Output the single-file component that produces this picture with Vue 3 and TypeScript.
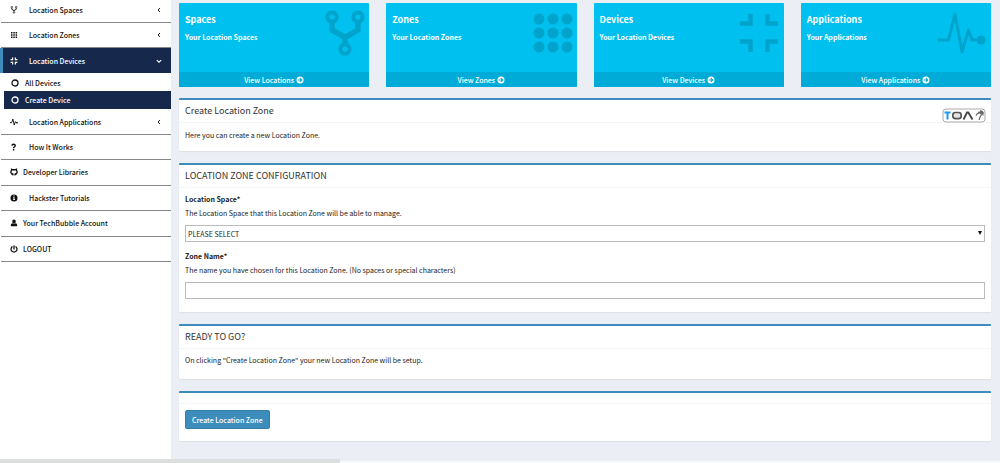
<script setup lang="ts">
import { ref } from 'vue'

interface NavItem { label: string; icon: string; wide?: boolean; arrow?: boolean }
interface Card { title: string; text: string; link: string; icon: string }

const topNav: NavItem[] = [
  { label: 'Location Spaces', icon: 'fork', wide: true, arrow: true },
  { label: 'Location Zones', icon: 'grid', wide: true, arrow: true },
]
const bottomNav: NavItem[] = [
  { label: 'Location Applications', icon: 'beat', wide: true, arrow: true },
  { label: 'How It Works', icon: 'question', wide: true },
  { label: 'Developer Libraries', icon: 'github' },
  { label: 'Hackster Tutorials', icon: 'info', wide: true },
  { label: 'Your TechBubble Account', icon: 'user' },
  { label: 'LOGOUT', icon: 'power' },
]
const cards: Card[] = [
  { title: 'Spaces', text: 'Your Location Spaces', link: 'View Locations', icon: 'fork' },
  { title: 'Zones', text: 'Your Location Zones', link: 'View Zones', icon: 'dots' },
  { title: 'Devices', text: 'Your Location Devices', link: 'View Devices', icon: 'corners' },
  { title: 'Applications', text: 'Your Applications', link: 'View Applications', icon: 'pulse' },
]
const space = ref('')
const zoneName = ref('')
</script>

<template>
  <svg class="defs" aria-hidden="true">
    <symbol id="fork" viewBox="0 0 48 48" preserveAspectRatio="xMaxYMid">
      <g fill="none" stroke="currentColor">
        <g stroke-width="4"><circle cx="11" cy="7" r="4.600" /><circle cx="37" cy="7" r="4.600" /><circle cx="24" cy="39" r="4.600" /></g>
        <path d="M11 12v8l13 7.500 13-7.500v-8M24 26v8" stroke-width="5.500" />
      </g>
    </symbol>
    <symbol id="dots" viewBox="0 0 48 48" preserveAspectRatio="xMaxYMid">
      <g fill="currentColor">
        <circle cx="10" cy="9" r="5.500" /><circle cx="24" cy="9" r="5.500" /><circle cx="38" cy="9" r="5.500" />
        <circle cx="10" cy="23" r="5.500" /><circle cx="24" cy="23" r="5.500" /><circle cx="38" cy="23" r="5.500" />
        <circle cx="10" cy="37" r="5.500" /><circle cx="24" cy="37" r="5.500" /><circle cx="38" cy="37" r="5.500" />
      </g>
    </symbol>
    <symbol id="grid" viewBox="0 0 8 8">
      <path fill="currentColor" d="M1 1h1.500v1.500H1zM3.300 1h1.500v1.500H3.300zM5.600 1h1.500v1.500H5.600zM1 3.300h1.500v1.500H1zM3.300 3.300h1.500v1.500H3.300zM5.600 3.300h1.500v1.500H5.600zM1 5.600h1.500v1.500H1zM3.300 5.600h1.500v1.500H3.300zM5.600 5.600h1.500v1.500H5.600z" />
    </symbol>
    <symbol id="corners" viewBox="0 0 48 48" preserveAspectRatio="xMaxYMid">
      <path fill="none" stroke="currentColor" stroke-width="4.500" d="M4 13.500h10.500V4M42 13.500H31.500V4M4 31.500h10.500V42M42 31.500H31.500V42" />
    </symbol>
    <symbol id="corners-small" viewBox="0 0 8 8">
      <path fill="none" stroke="currentColor" stroke-width="1.200" d="M.6 2.600h2v-2M7.400 2.600h-2v-2M.6 5.400h2v2M7.400 5.400h-2v2" />
    </symbol>
    <symbol id="pulse" viewBox="0 0 54 48">
      <path fill="none" stroke="currentColor" stroke-width="3" stroke-linejoin="round" stroke-linecap="round" d="M2 30h9.500L18 4 25 42l6.500-22L35 30H44" />
      <circle cx="44" cy="30" r="4.600" fill="currentColor" />
    </symbol>
    <symbol id="beat" viewBox="0 0 8 8">
      <path fill="none" stroke="currentColor" stroke-width=".9" stroke-linejoin="round" d="M0 4.700h1.700L2.900 1l1.300 6 1.200-3.400.6 1.100h1.500" />
      <circle cx="7" cy="4.700" r=".8" fill="currentColor" />
    </symbol>
    <symbol id="question" viewBox="0 0 10 10">
      <path fill="none" stroke="currentColor" stroke-width="1.800" d="M2.500 3.400C2.500.9 6.500 1 6.500 3.300 6.500 4.700 4.500 4.700 4.500 6.500M4.500 7.500V9.300" />
    </symbol>
    <symbol id="github" viewBox="0 0 10 10">
      <path fill="none" stroke="currentColor" stroke-width="1.700" d="M3.800 8.200C.4 7.200.7 4 2.100 2.700L2 1.500l1.800.7h2.400L8 1.500l-.1 1.200C9.300 4 9.600 7.200 6.200 8.200" />
      <path fill="currentColor" d="M2.500 6.400l1.900.6v2.400H3.200zM7.500 6.400l-1.900.6v2.400h1.200z" />
    </symbol>
    <symbol id="info" viewBox="0 0 10 10">
      <circle cx="5" cy="5" r="4.400" fill="currentColor" />
      <path fill="#fff" d="M4.300 2h1.400v1.200H4.300zM3.900 4h1.800v2.700h.6v.9H3.800v-.9h.6V4.900h-.5z" />
    </symbol>
    <symbol id="user" viewBox="0 0 10 10">
      <path fill="currentColor" d="M5 .6C3.600.6 2.800 1.800 2.800 3s.8 2.700 2.200 2.700S7.200 4.200 7.200 3 6.400.6 5 .6zM3 5.200C1.400 5.400 1 6.700 1 8c0 .7.400 1.200 1 1.200h6c.6 0 1-.5 1-1.200 0-1.300-.4-2.600-2-2.800-1 1.200-3 1.200-4 0z" />
    </symbol>
    <symbol id="power" viewBox="0 0 10 10">
      <path fill="none" stroke="currentColor" stroke-width="1.600" stroke-linecap="round" d="M2.700 2.300a3.700 3.700 0 1 0 4.600 0M5 1v4" />
    </symbol>
    <symbol id="ring" viewBox="0 0 8 8">
      <circle cx="4" cy="4" r="3" fill="none" stroke="currentColor" stroke-width="1.300" />
    </symbol>
    <symbol id="left" viewBox="0 0 10 10">
      <path fill="none" stroke="currentColor" stroke-width="1.200" d="M6.200 2.500L3.800 5l2.400 2.500" />
    </symbol>
    <symbol id="down" viewBox="0 0 10 10">
      <path fill="none" stroke="currentColor" stroke-width="1.300" d="M2.200 3.800L5 6.500l2.800-2.700" />
    </symbol>
    <symbol id="go" viewBox="0 0 8 8">
      <circle cx="4" cy="4" r="3.500" fill="currentColor" />
      <path fill="none" stroke="#00acd7" stroke-width="1.100" d="M1.600 4h4M3.900 2.100L5.800 4 3.900 5.900" />
    </symbol>
  </svg>

  <div class="page">
    <nav class="sidebar">
      <a v-for="n in topNav" :key="n.label" href="#" class="item">
        <svg class="icon"><use :href="'#' + n.icon" /></svg>
        <span class="label wide">{{ n.label }}</span>
        <svg class="icon chevron"><use href="#left" /></svg>
      </a>
      <a href="#" class="item active">
        <svg class="icon"><use href="#corners-small" /></svg>
        <span class="label wide">Location Devices</span>
        <svg class="icon chevron"><use href="#down" /></svg>
      </a>
      <div class="sub">
        <a href="#" class="subitem"><svg class="icon"><use href="#ring" /></svg>All Devices</a>
        <a href="#" class="subitem current"><svg class="icon"><use href="#ring" /></svg>Create Device</a>
      </div>
      <div class="rest">
        <a v-for="n in bottomNav" :key="n.label" href="#" class="item">
          <svg class="icon"><use :href="'#' + n.icon" /></svg>
          <span class="label" :class="{ wide: n.wide }">{{ n.label }}</span>
          <svg v-if="n.arrow" class="icon chevron"><use href="#left" /></svg>
        </a>
      </div>
    </nav>

    <main class="content">
      <section class="cards">
        <article v-for="c in cards" :key="c.title" class="card">
          <div class="card-body">
            <div>
              <h3>{{ c.title }}</h3>
              <p>{{ c.text }}</p>
            </div>
            <svg class="card-icon"><use :href="'#' + c.icon" /></svg>
          </div>
          <a href="#" class="card-link">{{ c.link }}<svg class="go"><use href="#go" /></svg></a>
        </article>
      </section>

      <section class="panel">
        <header>
          <h2>Create Location Zone</h2>
          <svg class="logo" viewBox="0 0 44 15" role="img" aria-label="TOA">
            <rect x="1" y="1" width="42" height="13" rx="3" fill="#fff" stroke="#aaa" />
            <path d="M2.500 4.500h6M5.500 4.500v7" stroke="#1e9bf0" stroke-width="2" fill="none" />
            <rect x="10.800" y="4.500" width="8.400" height="6.200" rx="2.600" stroke="#555" stroke-width="1.700" fill="#e4e4e4" />
            <path d="M21.500 11.500L25 4.500h1.300L30.500 11.500" stroke="#444" stroke-width="1.800" fill="none" />
            <path d="M34 7.500c1-2.800 4-3.300 5.500-1.200-.2 2-2.200 2.200-2.300 5.700M36 4.500c2.800-.9 5 .6 5.200 3M38 2.800c2 .2 3.300 1.400 3.500 2.700" stroke="#666" stroke-width="1.200" fill="none" />
          </svg>
        </header>
        <div class="body short"><p>Here you can create a new Location Zone.</p></div>
      </section>

      <section class="panel">
        <header><h2>LOCATION ZONE CONFIGURATION</h2></header>
        <form class="body form" @submit.prevent>
          <label for="space">Location Space*</label>
          <p>The Location Space that this Location Zone will be able to manage.</p>
          <div class="select">
            <select id="space" v-model="space"><option value="">PLEASE SELECT</option></select>
            <svg class="caret" viewBox="0 0 6 6"><path d="M1 1h4L3 5z" fill="#111" /></svg>
          </div>
          <label for="zone">Zone Name*</label>
          <p>The name you have chosen for this Location Zone. (No spaces or special characters)</p>
          <input id="zone" v-model="zoneName" type="text" />
        </form>
      </section>

      <section class="panel">
        <header><h2>READY TO GO?</h2></header>
        <div class="body ready"><p>On clicking "Create Location Zone" your new Location Zone will be setup.</p></div>
      </section>

      <section class="panel">
        <header class="blank"></header>
        <div class="body action"><button type="button">Create Location Zone</button></div>
      </section>
    </main>
    <div class="status"></div>
  </div>
</template>

<style>
body { margin: 0; background: #fff; }
</style>

<style scoped>
* { box-sizing: border-box; }
h2, h3, p { margin: 0; font-weight: 400; }
a { text-decoration: none; color: inherit; }
.defs { position: absolute; width: 0; height: 0; }
.page {
  position: relative;
  display: grid;
  grid-template-columns: 171px 1fr;
  min-height: 100vh;
  font: 7px/12px "Noto Sans CJK SC", "Noto Sans", sans-serif;
  color: #222;
}
.sidebar { background: #fff; color: #111; font-weight: 500; }
.item {
  display: flex;
  align-items: center;
  height: 25px;
  margin-left: 1px;
  padding: 0 8px 0 9px;
  border-bottom: 1px solid #888;
}
.item:first-child { height: 23px; padding-bottom: 2px; }
.icon { width: 8px; height: 8px; flex: none; }
.label { margin-left: 5px; }
.label.wide { margin-left: 11px; }
.chevron { margin-left: auto; }
.item.active {
  margin-left: 0;
  padding-left: 7px;
  border-left: 3px solid #3c8dbc;
  border-bottom: 0;
  background: #17284d;
  color: #fff;
}
.sub { padding: 1px 0 0 4px; }
.subitem { display: flex; align-items: center; gap: 6px; height: 17px; padding-left: 7px; }
.subitem.current { height: 18px; background: #17284d; color: #fff; }
.rest { display: grid; grid-template-rows: repeat(6, 1fr); min-height: 153px; }
.rest .item { height: auto; }
.rest .item:first-child { padding: 2px 8px 0 9px; }

.content { padding: 3px 9px 8px 8px; background: #ebeef4; border-bottom: 2px solid #f7f8fa; }
.cards { display: grid; grid-template-columns: repeat(4, 1fr); gap: 17px; margin-bottom: 11px; }
.card { border-radius: 1px; background: #00c0ef; color: #fff; overflow: hidden; }
.card-body { display: flex; justify-content: space-between; height: 69px; padding: 7px 0 0 6px; }
.card h3 { font-size: 9px; line-height: 20px; font-weight: 700; }
.card p { line-height: 14px; font-weight: 700; }
.card-icon { width: 54px; height: 48px; color: #00a3cb; }
.card-link { display: flex; justify-content: center; align-items: center; gap: 2px; height: 15px; background: #00acd7; font-weight: 500; }
.go { width: 8px; height: 8px; }

.panel {
  margin-bottom: 12px;
  border-top: 2px solid #3c8dbc;
  border-radius: 1px;
  background: #fff;
  box-shadow: 0 1px 1px #dde0e5;
}
.panel header {
  display: flex;
  justify-content: space-between;
  height: 23px;
  padding: 0 5px 0 6px;
  border-bottom: 1px solid #f4f4f4;
}
.panel h2 { font-size: 9px; line-height: 22px; color: #333; }
.logo { width: 44px; height: 15px; margin-top: 8px; }
.body { padding: 6px; }
.short { height: 28px; }
.form { display: flex; flex-direction: column; height: 124px; padding-top: 5px; }
.form label { font-weight: 700; line-height: 12px; }
.form p { line-height: 12px; margin: 2px 0 6px; }
.select { position: relative; margin-bottom: 8px; }
select, input {
  display: block;
  width: 100%;
  height: 17px;
  padding: 0 2px;
  border: 1px solid #bbb;
  border-radius: 0;
  background: #fff;
  color: #222;
  font: inherit;
  appearance: none;
}
.caret { position: absolute; right: 2px; top: 5px; width: 6px; height: 6px; pointer-events: none; }
.ready { height: 30px; padding-top: 5px; }
.blank.blank { height: 11px; }
.action { height: 37px; }
button {
  height: 19px;
  padding: 0 6px;
  border: 1px solid #367fa9;
  border-radius: 2px;
  background: #3c8dbc;
  color: #fff;
  font: inherit;
  font-weight: 500;
}
.status { position: absolute; left: 0; bottom: 0; width: 34%; height: 4px; background: #dcdddd; }
</style>
